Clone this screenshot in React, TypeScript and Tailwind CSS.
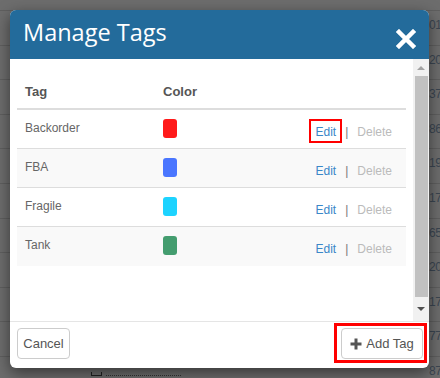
import React from "react";

const bgRows = ["01", "20", "37", "86", "19", "17", "65", "20", "17", "77", "87"];

const tags = [
  { id: 1, name: "Backorder", color: "bg-[#ff1a1a]", striped: false, marked: true },
  { id: 2, name: "FBA", color: "bg-[#4a76ff]", striped: true, marked: false },
  { id: 3, name: "Fragile", color: "bg-[#1dd3ff]", striped: false, marked: false },
  { id: 4, name: "Tank", color: "bg-[#449d6f]", striped: true, marked: false },
];

const CloseIcon = () => (
  <svg width="20" height="20" viewBox="0 0 20 20">
    <path d="M3 3 L17 17 M17 3 L3 17" stroke="#fff" strokeWidth="4.5" strokeLinecap="square" />
  </svg>
);

const PlusIcon = () => (
  <svg width="12" height="12" viewBox="0 0 12 12">
    <path d="M6 0.5 V11.5 M0.5 6 H11.5" stroke="#555" strokeWidth="3" />
  </svg>
);

const Backdrop = () => (
  <div className="flex flex-col pt-[10px]">
    {bgRows.map((n, i) => (
      <div
        key={i}
        className="h-[34.6px] border-t border-[#5f5f5f] pl-[429px] pt-[7px] text-[12px] leading-[14px] tracking-[-0.5px] text-[#3b4652]"
      >
        {n}
      </div>
    ))}
  </div>
);

const App = () => {
  return (
    <div
      className="relative h-[378px] w-[440px] overflow-hidden bg-[#6d6d6d]"
      style={{ fontFamily: '"Liberation Sans", Arial, sans-serif' }}
    >
      <Backdrop />
      <div className="absolute bottom-[2px] left-[91px] flex items-end gap-1">
        <span className="h-[4px] w-[11px] border-x border-b border-[#222]" />
        <span className="w-[75px] border-b border-dotted border-[#333]" />
      </div>

      {/* modal */}
      <div className="absolute left-[10px] top-[10px] flex h-[358px] w-[419px] flex-col overflow-hidden rounded-[6px] bg-white shadow-[0_5px_15px_rgba(0,0,0,0.5)]">
        <div className="flex h-[49px] items-center justify-between bg-[#236b9b] pl-[13px] pr-[13px]">
          <h2
            className="mb-[4px] text-[23.5px] leading-none text-white"
            style={{ fontFamily: '"Open Sans", Lato, sans-serif' }}
          >
            Manage Tags
          </h2>
          <span className="mt-[9px]">
            <CloseIcon />
          </span>
        </div>

        <div className="flex h-[262px]">
          <div className="flex-1 px-[7px] pt-[16px]">
            <div className="flex h-[35px] items-center border-b-2 border-[#dddddd] text-[13px] font-bold text-[#555]">
              <span className="w-[146px] pl-[8px]">Tag</span>
              <span>Color</span>
            </div>
            {tags.map((t) => (
              <div
                key={t.id}
                className={`flex h-[39px] border-b border-[#dddddd] text-[12px] last:border-b-0 ${
                  t.striped ? "bg-[#f9f9f9]" : "bg-white"
                }`}
              >
                <span className="w-[146px] pl-[8px] pt-[9px] text-[#666]">{t.name}</span>
                <span className={`mt-[9px] h-[19px] w-[14px] rounded-[3px] ${t.color}`} />
                <div className="ml-auto flex items-start gap-[9px] pr-[14px] pt-[13px]">
                  <span className="relative text-[#3a87c8]">
                    Edit
                    {t.marked && (
                      <span className="absolute -left-[7px] -right-[6px] -top-[4px] -bottom-[2px] border-2 border-[#f00]" />
                    )}
                  </span>
                  <span className="text-[#777]">|</span>
                  <span className="text-[#bbbbbb]">Delete</span>
                </div>
              </div>
            ))}
          </div>

          {/* scrollbar */}
          <div className="flex w-[16px] flex-col items-center bg-[#f1f1f1]">
            <div className="flex h-[17px] items-center">
              <span className="h-0 w-0 border-x-[4px] border-b-[4px] border-x-transparent border-b-[#a3a3a3]" />
            </div>
            <div className="h-[221px] w-[13px] bg-[#c1c1c1]" />
            <div className="flex h-[24px] items-center">
              <span className="h-0 w-0 border-x-[4px] border-t-[4px] border-x-transparent border-t-[#505050]" />
            </div>
          </div>
        </div>

        <div className="flex flex-1 items-start justify-between border-t border-[#e5e5e5] pl-[7px] pr-[6px] pt-[6px]">
          <button className="h-[31px] w-[53px] rounded-[4px] border border-[#cccccc] text-[13px] text-[#555]">
            Cancel
          </button>
          <div className="relative">
            <button className="flex h-[31px] w-[82px] items-center justify-center gap-[4px] rounded-[4px] border border-[#cccccc] text-[13px] text-[#555]">
              <PlusIcon />
              Add Tag
            </button>
            <span className="absolute -bottom-[4px] -left-[7px] -right-[4px] -top-[5px] border-[3px] border-[#f00]" />
          </div>
        </div>
      </div>
    </div>
  );
};

export default App;
